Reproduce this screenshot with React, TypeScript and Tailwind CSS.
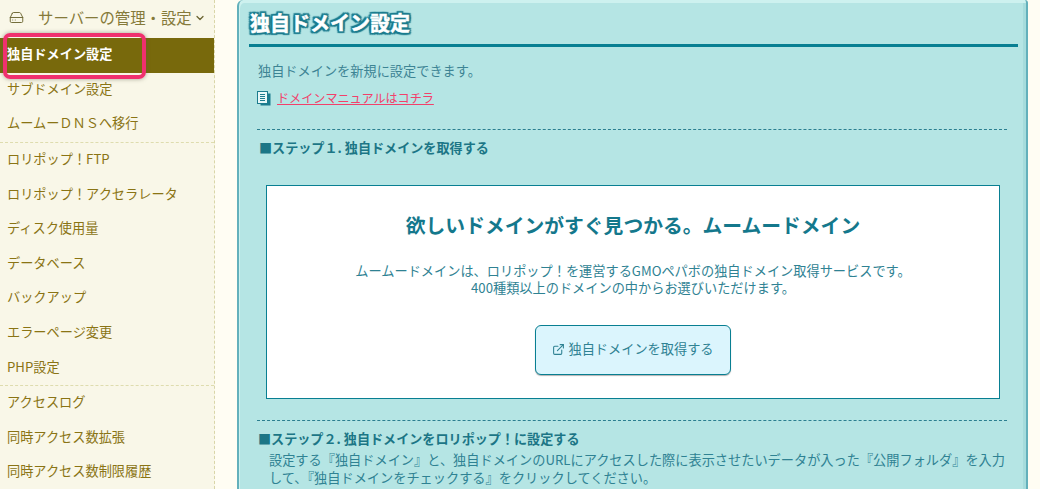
import React from "react";
import { ChevronDown, ExternalLink, HardDrive } from "lucide-react";

const font = "font-['Noto_Sans_CJK_JP','Noto_Sans',sans-serif]";

const groups = [
  ["サブドメイン設定", "ムームーＤＮＳへ移行"],
  ["ロリポップ！FTP", "ロリポップ！アクセラレータ", "ディスク使用量", "データベース", "バックアップ", "エラーページ変更", "PHP設定"],
  ["アクセスログ", "同時アクセス数拡張", "同時アクセス数制限履歴"],
];

const Sidebar: React.FC = () => (
  <aside className="relative w-[215px] shrink-0 bg-[#f9f7e8] border-r border-dashed border-[#d9d6a8]">
    <div className="h-[38px] flex items-center pl-[9px] pb-[3px] text-[15.4px] text-[#857a3a]">
      <HardDrive className="w-[15px] h-[15px] text-[#6b6430] mr-[14px]" strokeWidth={1.5} />
      <span>サーバーの管理・設定</span>
      <ChevronDown className="w-3 h-3 ml-[2px] text-[#6b6430]" strokeWidth={2.5} />
    </div>
    <div className="h-[35px] flex items-center pl-[7px] pb-[3px] bg-[#78690c] text-white text-[13.2px] font-bold">
      独自ドメイン設定
    </div>
    {groups.map((rows, i) => (
      <div key={i} className={i < 2 ? "border-b border-dashed border-[#dedcae]" : ""}>
        {rows.map((row) => (
          <div key={row} className="h-[34.6px] flex items-center pl-[7px] pb-[3px] text-[13.2px] text-[#8a7414]">
            {row}
          </div>
        ))}
      </div>
    ))}
    {/* hand-drawn highlight around the active row */}
    <div className="absolute left-[3px] top-[33px] w-[143px] h-[46px] rounded-[7px] border-[4px] border-[#f0306e] shadow-[0_0_4px_rgba(90,90,70,0.55)]" />
  </aside>
);

const DomainPanel: React.FC = () => (
  <main className="w-[791px] ml-[22px] h-[489px] overflow-hidden bg-[#b5e5e4] border-x-[2px] border-[#63b0bb] rounded-tl-[6px] rounded-tr-[3px] shadow-[inset_1px_3px_0_#cdf1ef,inset_-3px_0_0_#a6dcdc] pl-[10px] pr-[8px] text-[#2b7f90]">
    <h1 className="h-[44px] pt-[8px] pl-[1px] text-[20px] leading-[30px] font-bold text-white [-webkit-text-stroke:0.5px_#ffffff] [text-shadow:-2px_0_1px_#1c7c8e,2px_0_1px_#1c7c8e,0_-2px_1px_#1c7c8e,0_2px_1px_#1c7c8e,-2px_-2px_1px_#1c7c8e,2px_2px_1px_#1c7c8e,-2px_2px_1px_#1c7c8e,2px_-2px_1px_#1c7c8e]">
      独自ドメイン設定
    </h1>
    <div className="h-[3px] bg-[#087f92]" />

    <div className="mx-[8px] mr-[11px]">
      <p className="mt-[15px] pl-[1px] h-[18px] leading-[18px] text-[13.2px] text-[#3d8494]">
        独自ドメインを新規に設定できます。
      </p>
      <div className="mt-[9px] h-[18px] flex items-center">
        <svg viewBox="0 0 14 15" className="w-[14px] h-[15px] text-[#1c7c8e]">
          <rect x="3.5" y="2.5" width="10" height="12" fill="#1c7c8e" />
          <rect x="0.5" y="0.5" width="10" height="12" fill="#e8f8f8" stroke="currentColor" />
          <path d="M3 3.5h5M3 5.5h5M3 7.5h5M3 9.5h5" stroke="currentColor" />
        </svg>
        <a className="ml-[6px] text-[12.1px] leading-[18px] text-[#f2406a] underline">ドメインマニュアルはコチラ</a>
      </div>
      <div className="mt-[22px] border-t border-dashed border-[#2b7f90]" />
      <h2 className="mt-[8px] h-[20px] leading-[20px] pl-[2px] text-[13.1px] font-bold text-[#1c7686]">
        ■ステップ１. 独自ドメインを取得する
      </h2>

      <section className="mt-[27px] ml-[9px] mr-[7px] h-[214px] bg-white border border-[#087f92] flex flex-col items-center">
        <h3 className="mt-[24px] h-[30px] leading-[30px] text-[19.8px] font-bold text-[#14788c]">
          欲しいドメインがすぐ見つかる。ムームードメイン
        </h3>
        <p className="mt-[22px] text-[13.2px] leading-[17px] text-center text-[#2f8293]">
          ムームードメインは、ロリポップ！を運営するGMOペパボの独自ドメイン取得サービスです。
          <br />
          400種類以上のドメインの中からお選びいただけます。
        </p>
        <button className="mt-[29px] w-[196px] h-[50px] pb-[2px] flex items-center justify-center gap-[3px] rounded-[6px] border border-[#087f92] bg-[#dbf5fd] text-[13.2px] text-[#2f8293] shadow-[0_1px_1px_rgba(0,0,0,0.3)]">
          <ExternalLink className="w-[13px] h-[13px]" strokeWidth={2} />
          独自ドメインを取得する
        </button>
      </section>

      <div className="mt-[21px] border-t border-dashed border-[#2b7f90]" />
      <h2 className="mt-[8px] h-[20px] leading-[20px] pl-[1px] text-[13.1px] font-bold text-[#1c7686]">
        ■ステップ２. 独自ドメインをロリポップ！に設定する
      </h2>
      <p className="mt-[2px] pl-[12px] text-[13.2px] leading-[18px] text-[#2f8293]">
        設定する『独自ドメイン』と、独自ドメインのURLにアクセスした際に表示させたいデータが入った『公開フォルダ』を入力
        <br />
        して、『独自ドメインをチェックする』をクリックしてください。
      </p>
    </div>
  </main>
);

export default function App() {
  return (
    <div className={`${font} w-[1040px] h-[489px] overflow-hidden flex bg-[#fffdf3]`}>
      <Sidebar />
      <DomainPanel />
    </div>
  );
}
